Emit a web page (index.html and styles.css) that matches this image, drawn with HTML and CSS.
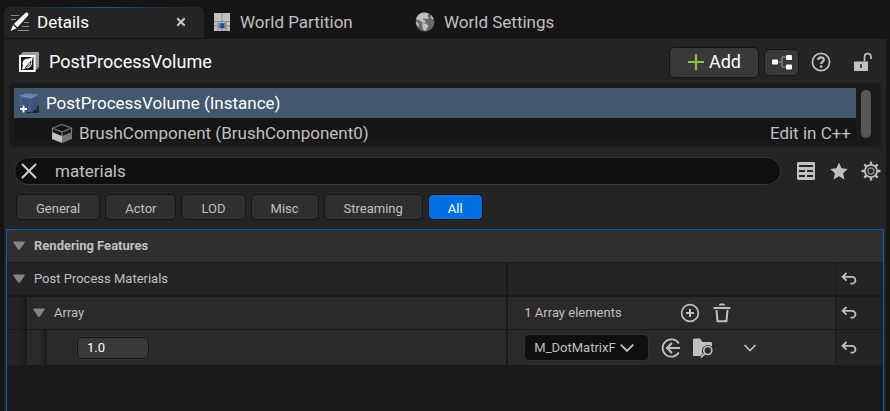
FILE: index.html
```html
<!DOCTYPE html>
<html lang="en">
<head>
<meta charset="utf-8">
<meta name="viewport" content="width=device-width, initial-scale=1">
<title>Details</title>
<link rel="stylesheet" href="styles.css">
</head>
<body>
<svg class="symbols" aria-hidden="true">
  <symbol id="undo" viewBox="0 0 16 14"><path d="M5.500 1 1.600 4.800l3.900 3.800M2 4.800h9a3.400 3.400 0 0 1 0 6.900H9.500" fill="none" stroke="currentColor" stroke-width="1.800"/></symbol>
  <symbol id="chevron" viewBox="0 0 14 14"><path d="M2 4.500 7 9.500l5-5" fill="none" stroke="currentColor" stroke-width="1.700" stroke-linecap="round"/></symbol>
  <symbol id="expander" viewBox="0 0 14 10"><path d="M1.500 1h11L8 7.800q-1 1.200-2 0z" fill="#858585" stroke="#858585" stroke-linejoin="round"/></symbol>
</svg>

<nav class="tabs">
  <div class="tab tab-active">
    <svg width="20" height="20" viewBox="0 0 20 20"><path d="M1 3.500h8M1 7.500h5M14 10.500h5M12 14.500h7M8 18.500h11" stroke="#8c8c8c"/><path d="M15.600.7q1.300-.7 2.300.3t.4 2.300L7.500 15.200l-3.600-3.100zM3 13l3.600 3.200L.5 19z" fill="#fff"/></svg>
    <a href="#details" class="tab-label">Details</a>
    <button class="tab-close" aria-label="Close tab"><svg width="10" height="10" viewBox="0 0 10 10"><path d="m1.300 1.300 7.400 7.400m0-7.400-7.400 7.400" stroke="#c8c8c8" stroke-width="2"/></svg></button>
  </div>
  <div class="tab">
    <svg width="18" height="18" viewBox="0 0 18 18"><path d="M1 0h16v18H1z" fill="#8c8c8c"/><path d="M1 0h7.500v8H1zM9.500 0H17v8H9.500zM1 9h3.500v3.500H1zM5.500 9H8v1.500H5.500zM9.500 9H12v1.500H9.500zM13.500 9H17v3.500h-3.500zM1 13.500h3.500V18H1zM5.500 15.500H8V18H5.500zM9.500 15.500H12V18H9.500zM13.500 13.500H17V18h-3.500z" fill="#c0c0c0"/><path d="M6 10h6.500v5.500H6z" fill="#75869b"/><path d="M7.500 10.500h3.500V15H7.500z" fill="#0755aa"/></svg>
    <a href="#partition" class="tab-label">World Partition</a>
  </div>
  <div class="tab">
    <svg width="20" height="20" viewBox="0 0 20 20"><circle cx="10" cy="10" r="9.400" fill="#686868"/><path d="M1 7Q3 1 9 .6l4.500.7-1 3 1.600 1.500-2.800 1.400-2.700-1-.6 1.700 3 .9-1.500 2.100-3-.8-2-2.200-2.500-.5zM7 11l4.500.7 2 2-1.500 2.700L10.500 19 8 17.500zM16.500 3.500l2.400 4-2-.8-1.300-1.500zM1 9.500l2.500 2 .5 3.500Q1 13 1 9.500z" fill="#c0c0c0"/></svg>
    <a href="#settings" class="tab-label">World Settings</a>
  </div>
</nav>

<main class="panel">
  <header class="actor">
    <svg class="actor-icon" width="22" height="22" viewBox="0 0 22 22"><path d="M1 5 5 1h16v15l-4 4V5z" fill="#9b9b9b"/><path d="M2 5h14.500v15H2z" fill="#181818" stroke="#fff" stroke-width="2"/><circle cx="9.200" cy="12.500" r="4.700" fill="#fff"/><path d="M10 7.800 15 6l-1.500 5zM8 17l-4 1.800L5 14z" fill="#fff"/><path d="M7 16.300 13 9.800q.8 4.200-2.500 6-1.700.9-3.500.5z" fill="#181818"/><path d="M8.300 16 12.500 11q-.2 3.600-4.200 5z" fill="#fff"/></svg>
    <h1 class="actor-name">PostProcessVolume</h1>
    <div class="actor-actions">
      <button class="btn btn-add"><svg width="18" height="18" viewBox="0 0 18 18"><path d="M9 1v16M1 9h16" stroke="#8bc53f" stroke-width="2.200"/></svg>Add</button>
      <button class="btn btn-graph" aria-label="Open blueprint"><svg width="22" height="16" viewBox="0 0 22 16"><path d="M6 8h5m4-5h-4v10h4" fill="none" stroke="#999"/><rect x="1" y="5.500" width="6" height="5" rx="1" fill="#fff"/><rect x="15" y="1" width="6" height="5" rx="1" fill="#fff"/><rect x="15" y="10.500" width="6" height="5" rx="1" fill="#fff"/></svg></button>
      <button class="plain help" aria-label="Help"><svg width="20" height="20" viewBox="0 0 20 20"><g fill="none" stroke="currentColor"><circle cx="10" cy="10" r="8.600" stroke-width="1.700"/><path d="M7.300 8c0-3.500 5.500-3.500 5.500-.3 0 2-2.700 2.200-2.700 4.300" stroke-width="2.200"/></g><circle cx="10.100" cy="14.600" r="1.300" fill="currentColor"/></svg></button>
      <button class="plain lock" aria-label="Lock"><svg width="20" height="20" viewBox="0 0 20 20"><path d="M1 9.500h14V19H1zM7.200 12v4h1.600v-4z" fill="currentColor" fill-rule="evenodd"/><path d="M11.500 9.500V5.200q0-3.500 3.300-3.500T18 5.200V7" fill="none" stroke="currentColor" stroke-width="1.700"/></svg></button>
    </div>
  </header>

  <section class="components">
    <ul class="tree">
      <li class="node node-selected">
        <svg width="22" height="22" viewBox="0 0 22 22"><path d="m15 13 6 1v7H8z" fill="#22262d"/><path d="M1.500 3.500 8 1.200l12 1.300-1.500 14L13 20.500 3 18.500z" fill="#48608f"/><path d="M1.500 3.500 8 1.200l12 1.300-6 3.200z" fill="#6480b2"/><path d="m14 5.700 6-3.200-1.500 14L13 20.500z" fill="#3d5078"/><path d="m4 6.500 7.500 1-.7 7.500-6-1z" fill="#3d527d"/><path d="m1.500 3.500 12.500 2.200 6-3.200" fill="none" stroke="#7c94c2"/><path d="M5.500 13v8m-4-4h8" stroke="#243352" stroke-width="3"/><path d="M5.500 13.500v7M2 17h7" stroke="#fff" stroke-width="2"/></svg>
        <span>PostProcessVolume (Instance)</span>
      </li>
      <li class="node node-child">
        <svg width="22" height="20" viewBox="0 0 22 20"><path d="m1 9 10 4v7L1 16z" fill="#c0c0c0"/><path d="m21 9-10 4v7l10-4z" fill="#737373"/><path d="M1.500 5 11 1.500 20.500 5 11 9zm0 0v5M20.500 5v5M11 9v4" fill="none" stroke="#777" stroke-width="1.200"/></svg>
        <span>BrushComponent (BrushComponent0)</span>
        <a href="#edit" class="edit">Edit in C++</a>
      </li>
    </ul>
    <div class="scrollbar"></div>
  </section>

  <div class="search-row">
    <div class="search">
      <button class="plain" aria-label="Clear search"><svg width="16" height="16" viewBox="0 0 16 16"><path d="m1.500 1.500 13 13m0-13-13 13" stroke="#d0d0d0" stroke-width="2" stroke-linecap="round"/></svg></button>
      <input type="text" class="search-input" aria-label="Search details" value="materials">
    </div>
    <div class="search-tools">
      <button class="plain" aria-label="Property matrix"><svg width="18" height="18" viewBox="0 0 18 18"><path d="M1 0h16l1 1v16l-1 1H1l-1-1V1zM2 3v2h14V3zM2 8v2h6V8zM10 8v2h6V8zM2 13v2h6v-2zM10 13v2h6v-2z" fill="currentColor" fill-rule="evenodd"/></svg></button>
      <button class="plain" aria-label="Favorites"><svg width="20" height="18" viewBox="-2 0 20 18"><path d="m9 .5 2.500 5.800 6.300.7-4.700 4.200 1.400 6.300L9 14.300l-5.500 3.200 1.400-6.300L.2 7l6.300-.7z" fill="currentColor"/></svg></button>
      <button class="plain" aria-label="View options"><svg width="20" height="20" viewBox="0 0 20 20"><g fill="none" stroke="currentColor"><path d="M10 .5v3m0 13v3M.5 10h3m13 0h3M3.300 3.300l2.200 2.200m9 9 2.200 2.200m0-13.400-2.200 2.200m-9 9-2.200 2.200" stroke-width="2.400"/><circle cx="10" cy="10" r="6.200" stroke-width="1.800"/><circle cx="10" cy="10" r="3" stroke="#8a8a8a" stroke-width="1.400"/></g></svg></button>
    </div>
  </div>

  <div class="filters">
    <button class="filter">General</button>
    <button class="filter">Actor</button>
    <button class="filter">LOD</button>
    <button class="filter">Misc</button>
    <button class="filter">Streaming</button>
    <button class="filter filter-on">All</button>
  </div>

  <section class="properties">
    <table class="grid">
      <colgroup><col class="col-name"><col><col class="col-reset"></colgroup>
      <tr class="category"><th colspan="3"><div class="cell"><svg width="14" height="10"><use href="#expander"/></svg>Rendering Features</div></th></tr>
      <tr class="group">
        <td><div class="cell"><svg width="14" height="10"><use href="#expander"/></svg>Post Process Materials</div></td>
        <td></td>
        <td><button class="plain reset" aria-label="Reset materials"><svg width="16" height="14"><use href="#undo"/></svg></button></td>
      </tr>
      <tr class="prop">
        <td><div class="indented"><i class="indent"></i><div class="cell"><svg width="14" height="10"><use href="#expander"/></svg>Array</div></div></td>
        <td><div class="value value-array"><span class="count">1 Array elements</span>
          <button class="plain" aria-label="Add element"><svg width="20" height="20" viewBox="0 0 20 20"><circle cx="10" cy="10" r="8.400" fill="none" stroke="currentColor" stroke-width="1.700"/><path d="M10 6v8m-4-4h8" stroke="currentColor" stroke-width="2"/></svg></button>
          <button class="plain" aria-label="Remove all"><svg width="18" height="20" viewBox="0 0 18 20"><path d="M.5 5h17M3.500 7l1 11.200h9L14.500 7" fill="none" stroke="currentColor" stroke-width="2"/><path d="M5.500 2.500 7 .5h4l1.500 2z" fill="currentColor"/></svg></button>
        </div></td>
        <td><button class="plain reset" aria-label="Reset array"><svg width="16" height="14"><use href="#undo"/></svg></button></td>
      </tr>
      <tr class="prop element">
        <td><div class="indented"><i class="indent"></i><i class="indent"></i><input type="text" class="weight" aria-label="Weight" value="1.0"></div></td>
        <td><div class="value value-asset">
          <div class="picker"><select class="asset" aria-label="Material"><option>M_DotMatrixF</option></select><svg class="picker-arrow" width="16" height="16"><use href="#chevron"/></svg></div>
          <button class="plain" aria-label="Use selected asset"><svg width="20" height="20" viewBox="0 0 20 20"><path d="M17.800 5.500A8.700 8.700 0 1 0 17.800 14.500" fill="none" stroke="currentColor" stroke-width="1.800"/><path d="M19 10H6m5-5-5 5 5 5" fill="none" stroke="currentColor" stroke-width="2.200"/></svg></button>
          <button class="plain browse" aria-label="Browse to asset"><svg width="20" height="20" viewBox="0 0 20 20"><path d="M0 1.500Q0 .5 1 .5h6L9.500 4H18l1 1v3.500a6 6 0 0 0-10 4.200q0 2 .8 3.300L7.500 18H1q-1 0-1-1z" fill="currentColor"/><circle cx="14.800" cy="12.500" r="4" fill="none" stroke="currentColor" stroke-width="1.700"/><path d="m12 15.300-4 4.200" stroke="currentColor" stroke-width="1.800"/></svg></button>
          <button class="plain more" aria-label="Element options"><svg width="14" height="14"><use href="#chevron"/></svg></button>
        </div></td>
        <td><button class="plain reset" aria-label="Reset element"><svg width="16" height="14"><use href="#undo"/></svg></button></td>
      </tr>
    </table>
  </section>
</main>
</body>
</html>
```
FILE: styles.css
```css
* { box-sizing: border-box; }
body {
  margin: 0;
  min-height: 100vh;
  display: flex;
  flex-direction: column;
  background: #151515;
  color: #c0c0c0;
  font: 17px/24px Roboto, "Liberation Sans", sans-serif;
}
svg { display: block; flex: none; }
button, input, select { font: inherit; color: inherit; margin: 0; }
a { color: inherit; text-decoration: none; }
.symbols { position: absolute; width: 0; height: 0; }
.plain { display: block; padding: 0; border: 0; background: none; }

.tabs { display: flex; padding: 7px 4px 0; height: 39px; }
.tab { display: flex; align-items: center; gap: 9px; width: 202px; padding: 0 9px 2px; }
.tab-active {
  width: 200px;
  padding: 0 18px 2px 6px;
  gap: 7px;
  height: 31px;
  border-radius: 6px 6px 0 0;
  color: #fff;
  background: linear-gradient(90deg, transparent 10%, #0b5cad 50%, transparent 90%) top / 100% 1px no-repeat, #242424;
}
.tab-close { margin-left: auto; padding: 0; border: 0; background: none; }

.panel {
  flex: 1;
  display: flex;
  flex-direction: column;
  margin: 0 4px;
  background: #242424;
}
.actor { display: flex; align-items: center; height: 44px; padding: 2px 13px 0 14px; }
.actor-name { margin: 0 0 0 9px; font: inherit; font-size: 18px; color: #fff; }
.actor-actions { display: flex; align-items: center; margin-left: auto; }
.btn {
  display: flex;
  align-items: center;
  justify-content: center;
  padding: 0;
  border: 1px solid #151515;
  border-radius: 5px;
  background: #383838;
  color: #fff;
}
.btn-add { width: 90px; height: 31px; gap: 4px; font-size: 18px; }
.btn-graph { width: 35px; height: 27px; margin-left: 5px; }
.help { margin-left: 12px; }
.lock { margin-left: 22px; }

.components {
  display: flex;
  gap: 5px;
  margin: 0 5px;
  padding: 5px;
  padding-right: 10px;
  border-radius: 5px;
  background: #1a1a1a;
}
.tree { flex: 1; margin: 0; padding: 0; list-style: none; background: #151515; }
.node { display: flex; align-items: center; gap: 6px; height: 23px; padding: 0 5px; }
.node-selected { height: 30px; padding-left: 4px; background: #43586f; color: #fff; }
.node-child { padding: 7px 5px 0 37px; }
.edit { margin-left: auto; }
.scrollbar { width: 10px; height: 48px; margin-top: 2px; border-radius: 5px; background: #575757; }

.search-row {
  display: flex;
  align-items: center;
  gap: 16px;
  margin-top: 1px;
  padding: 9px 5px 0 10px;
  border-top: 1px solid #1d1d1d;
}
.search {
  display: flex;
  align-items: center;
  flex: 1;
  height: 28px;
  padding: 0 18px 0 6px;
  border: 1px solid #383838;
  border-radius: 14px;
  background: #0f0f0f;
}
.search-input { flex: 1; padding: 0 0 0 18px; border: 0; outline: 0; background: none; }
.search-tools { display: flex; align-items: center; justify-content: space-between; width: 84px; }

.filters { display: flex; gap: 5px; padding: 9px 12px; }
.filter {
  height: 26px;
  padding: 2px 19px 0;
  border: 1px solid #151515;
  border-radius: 5px;
  background: #2f2f2f;
  font-size: 13px;
}
.filter-on { background: #0070e0; color: #fff; }

.properties {
  flex: 1;
  margin: 0 2px;
  border: 1px solid #0b5cad;
  border-bottom: 0;
  background: #1a1a1a;
  font-size: 13px;
}
.grid { width: 100%; table-layout: fixed; border-spacing: 0; }
.col-name { width: 57%; }
.col-reset { width: 48px; }
.grid td, .grid th { height: 33px; padding: 0; border-bottom: 1px solid #1a1a1a; text-align: left; }
.grid td + td { border-left: 1px solid #1a1a1a; }
.grid td:nth-child(2) { border-left-width: 2px; }
.category { background: #2f2f2f; }
.group { background: #242424; }
.grid .group td { height: 34px; border-bottom-width: 2px; }
.prop { background: #2a2a2a; }
.prop td:last-child { background: #242424; }
.grid .element td { height: 35px; border-bottom: 0; }
.cell { display: flex; align-items: center; gap: 8px; padding-left: 5px; }
.reset { margin-left: 5px; }
.indented { display: flex; align-items: center; height: 100%; }
.indent {
  align-self: stretch;
  width: 20px;
  min-height: 32px;
  background: linear-gradient(90deg, #242424 12px, #1a1a1a);
}
.indent + .indent { background: linear-gradient(90deg, #2a2a2a 12px, #1a1a1a); }
.element .indent { min-height: 35px; }
.weight {
  width: 72px;
  height: 22px;
  margin-left: 30px;
  padding: 0 9px;
  border: 1px solid #151515;
  border-radius: 5px;
  outline: 1px solid #333;
  background: #383838;
  color: #fff;
}
.value { display: flex; align-items: center; padding-left: 16px; }
.value-array { gap: 13px; }
.count { width: 143px; }
.value-asset { gap: 12px; }
.picker { position: relative; }
.asset {
  display: block;
  appearance: none;
  width: 125px;
  height: 27px;
  padding: 0 9px;
  border: 1px solid #333;
  border-radius: 5px;
  background: #0f0f0f;
}
.picker-arrow { position: absolute; right: 14px; top: 6px; pointer-events: none; }
.more { margin-left: 18px; }
```
